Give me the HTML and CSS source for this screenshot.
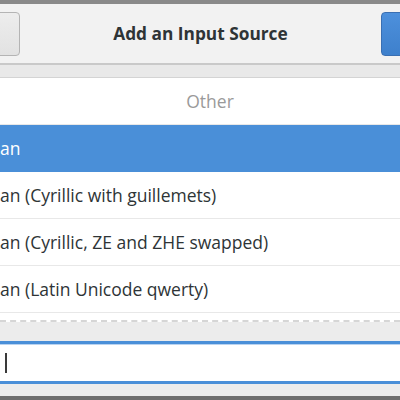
FILE: index.html
```html
<!DOCTYPE html>
<html>
<head>
<meta charset="utf-8">
<link rel="stylesheet" href="styles.css">
</head>
<body>
<div class="dialog">
  <div class="topbar"></div>
  <header class="header">
    <button class="btn btn-cancel"></button>
    <h1 class="title">Add an Input Source</h1>
    <button class="btn btn-add"></button>
  </header>
  <div class="band"></div>
  <ul class="list">
    <li class="row row-other">Other</li>
    <li class="row row-selected">an</li>
    <li class="row">an (Cyrillic with guillemets)</li>
    <li class="row">an (Cyrillic, ZE and ZHE swapped)</li>
    <li class="row">an (Latin Unicode qwerty)</li>
  </ul>
  <div class="list-tail"></div>
  <div class="search-area">
    <div class="entry"><span class="cursor"></span></div>
  </div>
  <div class="bottombar"></div>
</div>
</body>
</html>
```
FILE: styles.css
```css
* { box-sizing: border-box; }
html, body {
  margin: 0;
  padding: 0;
  width: 400px;
  height: 400px;
  overflow: hidden;
  background: #f2f2f2;
}
.dialog {
  display: flex;
  flex-direction: column;
  width: 400px;
  height: 400px;
  overflow: hidden;
  font-family: "Open Sans", "Noto Sans", sans-serif;
  color: #2e3436;
}
.topbar {
  height: 4px;
  background: #8a8a8a;
  flex: none;
}
.header {
  height: 61px;
  flex: none;
  display: flex;
  align-items: center;
  justify-content: space-between;
  background: #f2f2f2;
  border-bottom: 2px solid #c9c9c9;
}
.btn {
  height: 44px;
  width: 60px;
  border-radius: 4px;
  padding: 0;
}
.btn-cancel {
  margin-left: -40px;
  border: 1px solid #b4b4b4;
  background: linear-gradient(#ededed, #e2e2e2);
}
.btn-add {
  margin-right: -41px;
  border: 1px solid #3a6fb2;
  background: linear-gradient(#4d90dc, #3e80cc);
}
.title {
  margin: 0;
  font-size: 17.3px;
  font-weight: 700;
  color: #2e3436;
}
.band {
  height: 13px;
  flex: none;
  background: #e9e9e9;
  border-bottom: 1px solid #d4d4d4;
}
.list {
  list-style: none;
  margin: 0;
  padding: 0;
  background: #ffffff;
  flex: none;
}
.row {
  height: 47px;
  display: flex;
  align-items: center;
  font-size: 17.5px;
  border-bottom: 1px solid #e8e8e8;
  white-space: nowrap;
}
.row-other {
  justify-content: center;
  padding-left: 20px;
  color: #9a9a9a;
}
.row-selected {
  background: #4a8fd8;
  color: #ffffff;
  border-bottom-color: #4a8fd8;
}
.list-tail {
  height: 9px;
  flex: none;
  background: #ffffff;
  border-bottom: 2px dashed #d6d6d6;
}
.search-area {
  flex: none;
  height: 74px;
  background: #ececec;
  padding-top: 19px;
}
.entry {
  height: 43px;
  margin: 0 -4px;
  background: #ffffff;
  border-top: 3px solid #4a8fd8;
  border-bottom: 3px solid #4a8fd8;
  box-shadow: inset 0 1px 0 #b9d3f0;
  display: flex;
  align-items: center;
  padding-left: 9px;
}
.cursor {
  width: 2px;
  height: 20px;
  background: #3a3a3a;
}
.bottombar {
  flex: 1;
  background: #6e6e6e;
}
```
